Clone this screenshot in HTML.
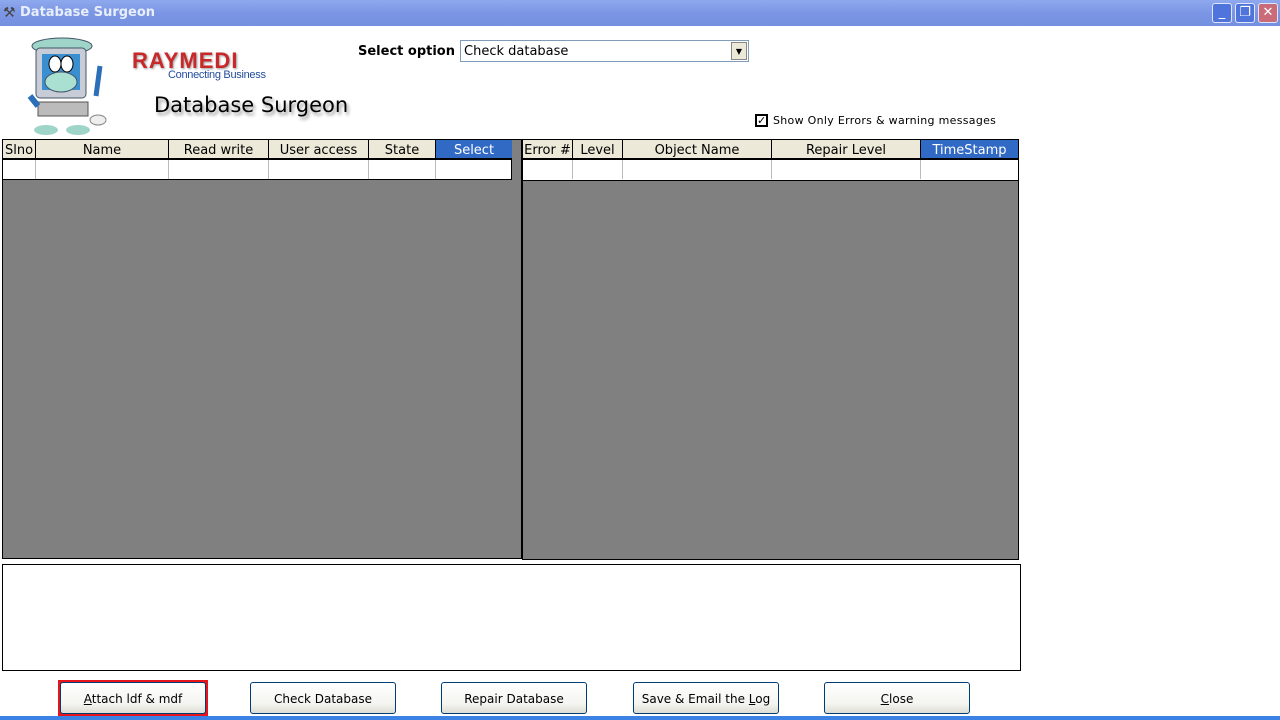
<!DOCTYPE html><html><head><style>
*{margin:0;padding:0;box-sizing:border-box}
body{width:1280px;height:720px;background:#fff;position:relative;overflow:hidden;font-family:"DejaVu Sans","Liberation Sans",sans-serif;font-size:13px;color:#000}
.a{position:absolute}
.tb{left:0;top:0;width:1280px;height:26px;background:linear-gradient(#8fa9ee,#7b96e4 50%,#7490e0);color:#e8eefc;font-size:13px;font-weight:bold;padding:5px 0 0 20px}
.wb{top:3px;width:20px;height:20px;border:1px solid #dfe6fb;border-radius:3px;background:#4f74dc;color:#fff;text-align:center;font-size:13px;line-height:18px}
.h{position:absolute;top:0;height:20px;background:#ece9d8;border-right:1px solid #000;border-bottom:2px solid #000;text-align:center;font-size:13px;line-height:21px}
.c{position:absolute;top:20px;height:19px;border-right:1px solid #bbb}
.btn{position:absolute;top:682px;width:146px;height:32px;border:1px solid #003c74;border-radius:3px;background:linear-gradient(#fff,#f4f4f0 70%,#dcdcd3);text-align:center;line-height:32px;font-size:12px}
</style></head><body>
<div class="a tb">Database Surgeon</div>
<div class="a" style="left:3px;top:5px;font-size:14px;color:#444">⚒</div>
<div class="a wb" style="left:1212px">_</div>
<div class="a wb" style="left:1235px">❐</div>
<div class="a wb" style="left:1258px;background:#c96b78">✕</div>
<svg class="a" style="left:24px;top:36px" width="90" height="102" viewBox="0 0 90 102">
<ellipse cx="38" cy="10" rx="30" ry="8" fill="#9fd4c8" stroke="#456" />
<rect x="12" y="12" width="50" height="50" rx="4" fill="#c8ccd6" stroke="#456"/>
<rect x="18" y="18" width="38" height="36" fill="#3a8fd1"/>
<ellipse cx="31" cy="28" rx="6" ry="8" fill="#fff" stroke="#000"/><ellipse cx="43" cy="28" rx="6" ry="8" fill="#fff" stroke="#000"/>
<ellipse cx="37" cy="46" rx="16" ry="10" fill="#a9e0d2" stroke="#456"/>
<rect x="14" y="66" width="50" height="14" fill="#bbb" stroke="#555"/>
<ellipse cx="22" cy="94" rx="12" ry="5" fill="#9fd4c8"/><ellipse cx="54" cy="94" rx="12" ry="5" fill="#9fd4c8"/>
<path d="M6 60 L14 70" stroke="#2a6fb8" stroke-width="6"/><path d="M72 60 L76 30" stroke="#2a6fb8" stroke-width="5"/>
<ellipse cx="74" cy="84" rx="8" ry="5" fill="#eee" stroke="#888"/>
</svg>
<div class="a" style="left:132px;top:48px;font-family:'Liberation Sans',sans-serif;font-weight:900;font-size:22px;color:#c8282a;letter-spacing:1px;text-shadow:1px 1px 2px #999">RAYMEDI</div>
<div class="a" style="left:168px;top:69px;font-family:'Liberation Sans',sans-serif;font-size:11px;color:#234c9c;letter-spacing:-.3px">Connecting Business</div>
<div class="a" style="left:154px;top:93px;font-size:21px;text-shadow:2px 3px 3px #999">Database Surgeon</div>
<div class="a" style="left:358px;top:44px;font-weight:bold;font-size:13px">Select option</div>
<div class="a" style="left:460px;top:40px;width:289px;height:22px;border:1px solid #7f9db9;padding:3px 3px;font-size:13px">Check database
<div class="a" style="right:1px;top:1px;width:16px;height:18px;background:#ece9d8;border:1px solid #888;font-size:8px;text-align:center;line-height:17px">▼</div></div>
<div class="a" style="left:755px;top:114px;width:13px;height:13px;border:2px solid #000;font-size:11px;line-height:9px;text-align:center;font-weight:bold">✓</div>
<div class="a" style="left:773px;top:114px;font-size:11px;letter-spacing:.3px">Show Only Errors &amp; warning messages</div>
<div class="a" style="left:2px;top:139px;width:520px;height:420px;background:#808080;border:1px solid #000">
<div class="a" style="left:0;top:0;width:509px;height:40px;background:#fff;border-right:1px solid #000;border-bottom:1px solid #000">
<div class="h" style="left:0;width:33px">Slno</div><div class="h" style="left:33px;width:133px">Name</div><div class="h" style="left:166px;width:100px">Read write</div><div class="h" style="left:266px;width:100px">User access</div><div class="h" style="left:366px;width:67px">State</div><div class="h" style="left:433px;width:76px;background:#316ac5;color:#fff;border-right:0">Select</div>
<div class="c" style="left:0;width:33px"></div><div class="c" style="left:33px;width:133px"></div><div class="c" style="left:166px;width:100px"></div><div class="c" style="left:266px;width:100px"></div><div class="c" style="left:366px;width:67px"></div>
</div></div>
<div class="a" style="left:522px;top:139px;width:497px;height:421px;background:#808080;border:1px solid #000">
<div class="a" style="left:0;top:0;width:495px;height:41px;background:#fff;border-bottom:1px solid #000">
<div class="h" style="left:0;width:50px">Error #</div><div class="h" style="left:50px;width:50px">Level</div><div class="h" style="left:100px;width:149px">Object Name</div><div class="h" style="left:249px;width:149px">Repair Level</div><div class="h" style="left:398px;width:97px;background:#316ac5;color:#fff;border-right:0">TimeStamp</div>
<div class="c" style="left:0;width:50px"></div><div class="c" style="left:50px;width:50px"></div><div class="c" style="left:100px;width:149px"></div><div class="c" style="left:249px;width:149px"></div>
</div></div>
<div class="a" style="left:2px;top:564px;width:1019px;height:107px;border:1px solid #000"></div>
<div class="a" style="left:58px;top:680px;width:150px;height:36px;border:3px solid #e8141c"></div>
<div class="btn" style="left:60px"><u>A</u>ttach ldf &amp; mdf</div>
<div class="btn" style="left:250px">Check Database</div>
<div class="btn" style="left:441px">Repair Database</div>
<div class="btn" style="left:633px">Save &amp; Email the <u>L</u>og</div>
<div class="btn" style="left:824px"><u>C</u>lose</div>
<div class="a" style="left:0;top:716px;width:1280px;height:4px;background:#3c82e4"></div>
</body></html>
